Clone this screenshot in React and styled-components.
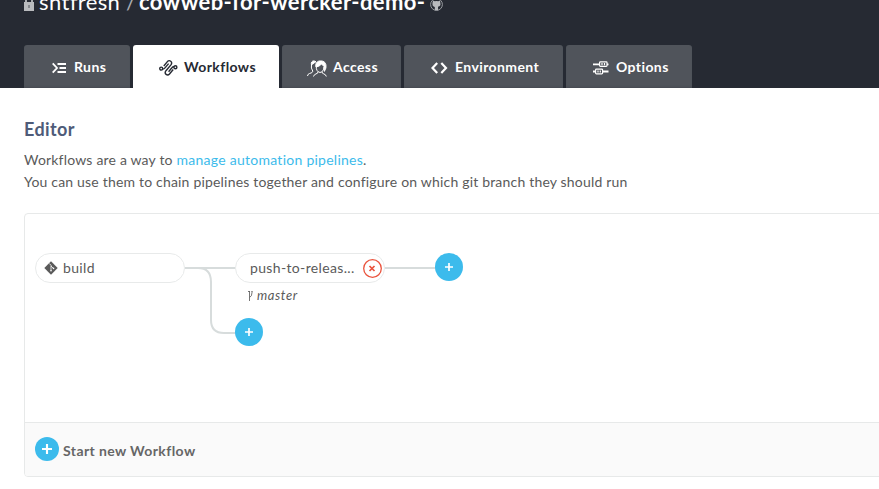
import React from "react";
import styled, { createGlobalStyle } from "styled-components";

const Global = createGlobalStyle`
  * { box-sizing: border-box; }
  html, body { margin: 0; background: #fff; overflow: hidden; }
  body { font-family: Lato, "Liberation Sans", sans-serif; color: #5a5a5a; }
  svg { display: block; flex: none; }
`;

const Page = styled.div`
  width: 100%;
  height: 489px;
  overflow: hidden;
`;
const Header = styled.header`
  height: 88px;
  background: #262a33;
  padding-left: 24px;
  display: flex;
  flex-direction: column;
  justify-content: space-between;
`;
const Title = styled.h1`
  margin: -13px 0 0;
  height: 30px;
  display: flex;
  align-items: center;
  font-size: 22px;
  line-height: 30px;
  font-weight: 400;
  letter-spacing: 0.38px;
  color: #fff;
  white-space: pre;
`;
const Owner = styled.span`
  margin-left: 5px;
  width: 82px;
`;
const Slash = styled.span`
  width: 18px;
  padding-left: 5px;
  color: #a9acb1;
`;
const Repo = styled.strong`
  font-weight: 700;
  width: 291px;
`;
const TitleIcon = styled.span`
  margin-top: ${(p) => p.$drop}px;
`;
const Tabs = styled.nav`
  display: flex;
  gap: 3px;
`;
const Tab = styled.a`
  height: 43px;
  width: ${(p) => p.$width}px;
  padding-left: ${(p) => p.$inset}px;
  display: flex;
  align-items: center;
  border-radius: 3px 3px 0 0;
  font-size: 14px;
  font-weight: 700;
  letter-spacing: 0.4px;
  background: ${(p) => (p.$active ? "#fff" : "#50545b")};
  color: ${(p) => (p.$active ? "#262a33" : "#fff")};
  box-shadow: ${(p) => (p.$active ? "none" : "inset 0 -2px 2px -1px #464a52")};
`;
const TabIcon = styled.span`
  width: ${(p) => p.$width}px;
  margin-top: 3px;
`;
const TabLabel = styled.span`
  padding-bottom: 1px;
`;
const Main = styled.main`
  padding: 30px 0 0 24px;
`;
const Heading = styled.h2`
  margin: 0;
  font-size: 18px;
  line-height: 22px;
  font-weight: 700;
  letter-spacing: 0.4px;
  color: #4e5b78;
`;
const Intro = styled.p`
  margin: 9px 0 20px;
  font-size: 14px;
  line-height: 22px;
  letter-spacing: 0.19px;
`;
const Link = styled.a`
  color: #3cbbeb;
  letter-spacing: 0.26px;
`;
const Panel = styled.section`
  height: 264px;
  width: 900px;
  border: 1px solid #e7e9e9;
  border-radius: 4px;
  display: flex;
  flex-direction: column;
  overflow: hidden;
`;
const Canvas = styled.div`
  position: relative;
  flex: 1;
`;
const Links = styled.svg`
  position: absolute;
  left: 0;
  top: 0;
`;
const Node = styled.div`
  position: absolute;
  left: ${(p) => p.$x}px;
  top: 39px;
  width: 150px;
  height: 30px;
  padding-left: ${(p) => p.$inset}px;
  display: flex;
  align-items: center;
  border: 1px solid #e8eaea;
  border-radius: 15px;
  background: #fff;
  font-size: 14px;
  letter-spacing: 0.35px;
`;
const NodeLabel = styled.span`
  width: ${(p) => p.$width}px;
  margin-left: ${(p) => p.$gap || 0}px;
  padding-bottom: 2px;
  white-space: nowrap;
`;
const Add = styled.button`
  position: absolute;
  left: ${(p) => p.$x}px;
  top: ${(p) => p.$y}px;
  width: 28px;
  height: 28px;
  padding: 0;
  border: 0;
  border-radius: 50%;
  background: #3cbbec;
  display: grid;
  place-items: center;
`;
const Branch = styled.div`
  position: absolute;
  left: 223px;
  top: 73px;
  display: flex;
  align-items: center;
  gap: 4px;
  font-size: 13px;
  line-height: 17px;
  letter-spacing: 0.6px;
  font-style: italic;
`;
const Footer = styled.footer`
  height: 54px;
  border-top: 1px solid #e7e9e9;
  background: #fafafa;
  padding: 0 0 2px 10px;
  display: flex;
  align-items: center;
  gap: 4px;
  font-size: 14px;
  font-weight: 700;
  letter-spacing: 0.4px;
  color: #666;
`;
const StartIcon = styled.span`
  width: 24px;
  height: 24px;
  border-radius: 50%;
  background: #3cbbec;
  display: grid;
  place-items: center;
`;
const StartText = styled.span`
  padding-top: 4px;
`;

const Plus = ({ size = 8 }) => (
  <svg width={size} height={size} viewBox="0 0 8 8" stroke="#fff" strokeWidth="1.7">
    <path d="M4 0v8M0 4h8" />
  </svg>
);
const Lock = () => (
  <svg width="10" height="16" viewBox="0 0 10 16">
    <path d="M2 8V4.500a3 3 0 0 1 6 0V8" fill="none" stroke="#b9bbbe" strokeWidth="1.8" />
    <path d="M0 7h10v9H0z" fill="#b9bbbe" />
    <path d="M4.200 10h1.600v3H4.200z" fill="#777b80" />
  </svg>
);
const Github = () => (
  <svg width="13" height="13" viewBox="0 0 13 13">
    <circle cx="6.5" cy="6.5" r="5.9" fill="none" stroke="#9b9ea2" />
    <path d="M3 2.5l1.7.8q1.8-.4 3.6 0l1.7-.8.3 2.2q1 3.3-2.3 4l.2 3.5H4.8V9Q2 8.500 2.500 4.800z" fill="#b9bbbe" />
  </svg>
);
const RunsIcon = () => (
  <svg width="15" height="12" viewBox="0 0 15 12" fill="none" stroke="#fff" strokeWidth="1.8">
    <path d="M.7 1.300 5 6 .7 10.700M5.500 2H14M7.500 6H14M5.500 10H14" />
  </svg>
);
const FlowIcon = () => (
  <svg width="19" height="18" viewBox="0 0 19 18" fill="none" stroke="#262a33" strokeWidth="1.4">
    <circle cx="2.200" cy="9.600" r="1.500" />
    <circle cx="16.400" cy="8.300" r="1.500" />
    <path d="M3.600 10.100Q5 10.200 6 8.900L9.600 4.600M4.800 7 8.400 2.600Q10 .9 11.700 2.200T12.100 5.600L7 11.700Q5.300 14 7.100 15.400T10.500 15L14.200 10.500M15 7.800Q13.700 7.700 12.700 9L9.600 12.700" />
  </svg>
);
const AccessIcon = () => (
  <svg width="20" height="17" viewBox="0 0 20 17" fill="none" stroke="#fff" strokeWidth="1">
    <path d="M4.500 5C3.800 2.500 5 .8 7 .9L9 1.700 7 3 5.700 4z" fill="#fff" />
    <path d="M4.500 4q-.8 4.500 1.300 7.200Q5.500 13 2.500 13.500.7 14 .5 16" />
    <path d="M9 7C8 3.500 10 .9 13.500.9c4 0 5.700 2.300 5.500 5.800 0 2-1 3.300-1.600 4.700L17 6.500 14.500 4Q12.500 6.500 9 7z" fill="#fff" />
    <path d="M9.300 6.500Q9 11.500 13 12.500q3.700-.7 4-5.500M11 11.500q.3 2-2 2.400Q7 14.500 6.500 16.500M15 11.500q-.2 2 1.800 2.400 2 .5 2.500 2.600" />
  </svg>
);
const CodeIcon = () => (
  <svg width="17" height="12" viewBox="0 0 17 12" fill="none" stroke="#fff" strokeWidth="2.200">
    <path d="M6.200 1 1.500 6l4.700 5M10.300 1 15 6l-4.700 5" />
  </svg>
);
const OptionsIcon = () => (
  <svg width="16" height="14" viewBox="0 0 16 14" fill="none" stroke="#fff" strokeWidth="1.200">
    <path d="M0 3.300h6M14 3.300h1.500M0 10.500h2.500M10 10.500h5.500" strokeWidth="1.800" />
    <rect x="6.600" y=".8" width="7.400" height="4.600" rx=".8" />
    <rect x="2.600" y="8.200" width="7" height="4.600" rx=".8" />
    <path d="M9 2v2.200M11.500 2v2.200M5 9.400v2.200M7.300 9.400v2.200" />
  </svg>
);
const GitIcon = () => (
  <svg width="14" height="14" viewBox="0 0 14 14">
    <path d="M7 .3 13.700 7 7 13.700.3 7z" fill="#5a5a5a" />
    <path d="M5.300 2.500 7 4.300v5.500M7 5l2.500 2.500" fill="none" stroke="#fff" strokeWidth=".8" />
    <circle cx="7" cy="9.700" r=".8" fill="#fff" />
    <circle cx="9.500" cy="7.400" r=".8" fill="#fff" />
  </svg>
);
const Remove = () => (
  <svg width="19" height="19" viewBox="0 0 19 19" fill="none" stroke="#ea533d">
    <circle cx="9.500" cy="9.500" r="8.800" strokeWidth="1.300" />
    <path d="m6.500 7 5 5m0-5-5 5" strokeWidth="1.700" />
  </svg>
);
const BranchIcon = () => (
  <svg width="5" height="10" viewBox="0 0 5 10" fill="none" stroke="#666" strokeWidth=".9">
    <path d="M1.500 0v10M0 .5h2M1.500 6.500Q4 5.500 4 1.500M3 .8h2" />
  </svg>
);

const tabs = [
  { label: "Runs", width: 106, inset: 28, icon: RunsIcon, slot: 22 },
  { label: "Workflows", width: 146, inset: 26, icon: FlowIcon, slot: 25, active: true },
  { label: "Access", width: 119, inset: 25, icon: AccessIcon, slot: 26 },
  { label: "Environment", width: 159, inset: 27, icon: CodeIcon, slot: 24 },
  { label: "Options", width: 126, inset: 27, icon: OptionsIcon, slot: 23 },
];

export default function App() {
  return (
    <Page>
      <Global />
      <Header>
        <Title>
          <TitleIcon $drop={1}><Lock /></TitleIcon>
          <Owner>shtfresh</Owner>
          <Slash>/</Slash>
          <Repo>cowweb-for-wercker-demo-</Repo>
          <TitleIcon $drop={5}><Github /></TitleIcon>
        </Title>
        <Tabs>
          {tabs.map(({ label, width, inset, icon: Icon, slot, active }) => (
            <Tab key={label} $width={width} $inset={inset} $active={active}>
              <TabIcon $width={slot}><Icon /></TabIcon>
              <TabLabel>{label}</TabLabel>
            </Tab>
          ))}
        </Tabs>
      </Header>
      <Main>
        <Heading>Editor</Heading>
        <Intro>
          Workflows are a way to <Link>manage automation pipelines</Link>.<br />
          You can use them to chain pipelines together and configure on which git branch they should run
        </Intro>
        <Panel>
          <Canvas>
            <Links width="440" height="140" fill="none" stroke="#d7dcdc" strokeWidth="2">
              <path d="M160 54H211M360 54H411M173 54Q186 54 186 68V106Q186 119 199 119H211" />
            </Links>
            <Node $x={10} $inset={8}>
              <GitIcon />
              <NodeLabel $gap={5}>build</NodeLabel>
            </Node>
            <Node $x={210} $inset={14}>
              <NodeLabel $width={113}>push-to-releas...</NodeLabel>
              <Remove />
            </Node>
            <Branch><BranchIcon />master</Branch>
            <Add $x={410} $y={39}><Plus /></Add>
            <Add $x={210} $y={104}><Plus /></Add>
          </Canvas>
          <Footer>
            <StartIcon><Plus size={10} /></StartIcon>
            <StartText>Start new Workflow</StartText>
          </Footer>
        </Panel>
      </Main>
    </Page>
  );
}
